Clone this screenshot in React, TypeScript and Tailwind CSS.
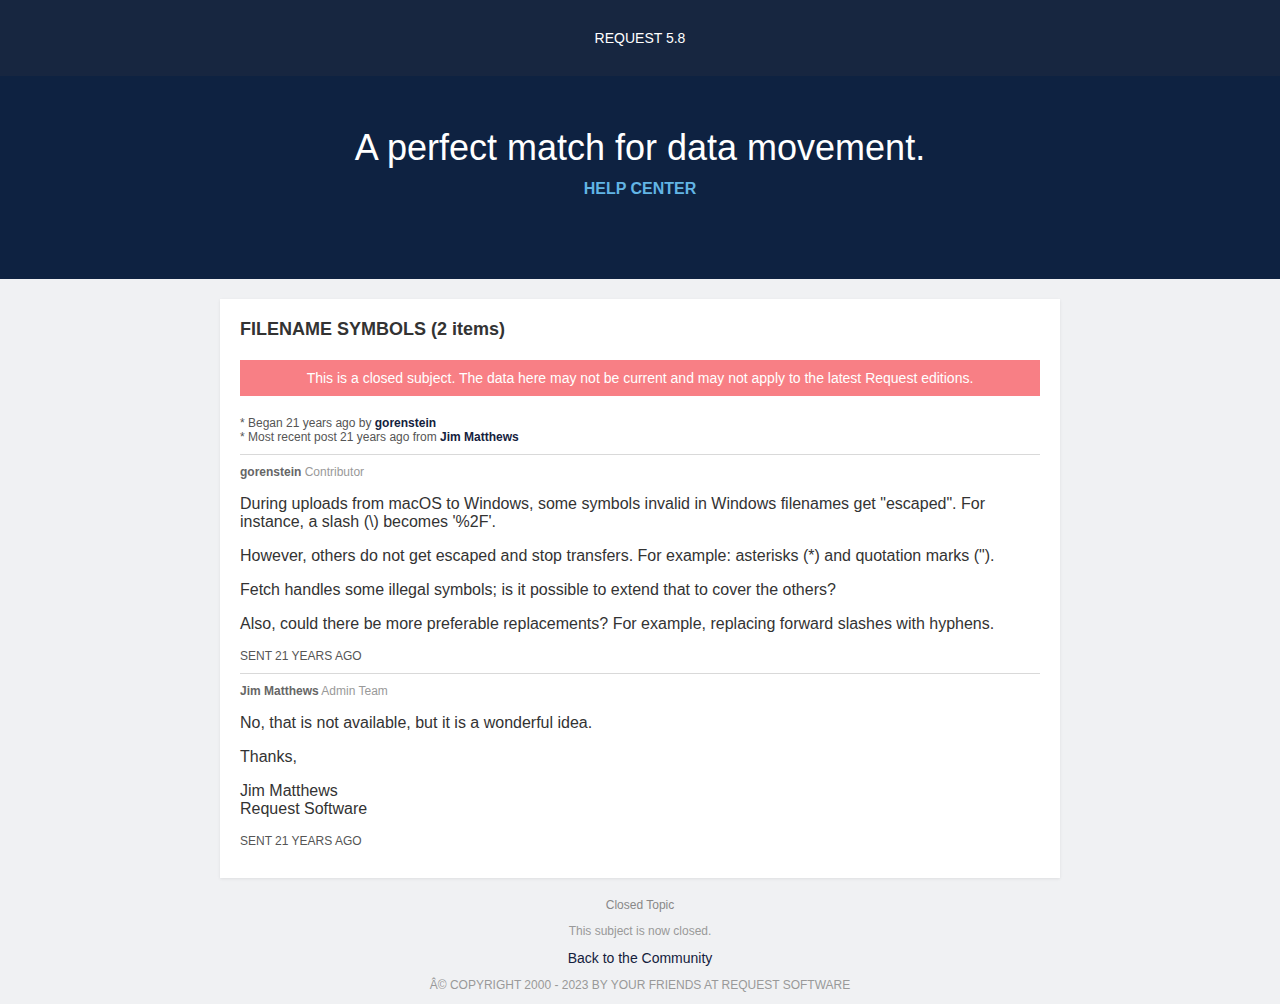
export default function App() {
    return (
        <div className="min-h-[1004px] bg-[#f0f1f3] text-[#333] font-['Liberation_Sans',Arial,sans-serif]">
            <div className="h-[76px] bg-[#172640] flex items-center justify-center">
                <span className="text-white text-[14px]">REQUEST 5.8</span>
            </div>

            <div className="h-[203px] bg-[#0e2241] flex flex-col items-center pt-[50px]">
                <h1 className="text-white text-[36px] leading-[44px]">A perfect match for data movement.</h1>
                <a className="mt-[9px] text-[#62b5e5] text-[16px] font-bold leading-[20px]">HELP CENTER</a>
            </div>

            <div className="pt-[20px] flex flex-col items-center">
                <div className="w-[840px] bg-white shadow-[0_1px_3px_rgba(0,0,0,0.08)] px-[20px] pt-[18px] pb-[30px]">
                    <h2 className="text-[18px] font-bold leading-[24px] text-[#333]">FILENAME SYMBOLS (2 items)</h2>

                    <div className="mt-[19px] h-[36px] bg-[#f87f85] flex items-center justify-center text-white text-[14px]">
                        This is a closed subject. The data here may not be current and may not apply to the latest Request editions.
                    </div>

                    <div className="mt-[20px] text-[12px] leading-[14px] text-[#555]">
                        <div>* Began 21 years ago by <span className="font-bold text-[#14213d]">gorenstein</span></div>
                        <div>* Most recent post 21 years ago from <span className="font-bold text-[#14213d]">Jim Matthews</span></div>
                    </div>

                    <div className="mt-[10px] border-t border-[#d9d9d9]" />

                    <div className="pt-[10px]">
                        <div className="text-[12px] leading-[14px]">
                            <span className="font-bold text-[#666]">gorenstein</span> <span className="text-[#999]">Contributor</span>
                        </div>
                        <div className="mt-[16px] text-[16px] leading-[18px] text-[#333] flex flex-col gap-[16px]">
                            <p>During uploads from macOS to Windows, some symbols invalid in Windows filenames get "escaped". For instance, a slash (\) becomes '%2F'.</p>
                            <p>However, others do not get escaped and stop transfers. For example: asterisks (*) and quotation marks (").</p>
                            <p>Fetch handles some illegal symbols; is it possible to extend that to cover the others?</p>
                            <p>Also, could there be more preferable replacements? For example, replacing forward slashes with hyphens.</p>
                        </div>
                        <div className="mt-[16px] text-[12px] leading-[14px] text-[#555]">SENT 21 YEARS AGO</div>
                    </div>

                    <div className="mt-[10px] border-t border-[#d9d9d9]" />

                    <div className="pt-[10px]">
                        <div className="text-[12px] leading-[14px]">
                            <span className="font-bold text-[#666]">Jim Matthews</span> <span className="text-[#999]">Admin Team</span>
                        </div>
                        <div className="mt-[16px] text-[16px] leading-[18px] text-[#333] flex flex-col gap-[16px]">
                            <p>No, that is not available, but it is a wonderful idea.</p>
                            <p>Thanks,</p>
                            <p>Jim Matthews<br />Request Software</p>
                        </div>
                        <div className="mt-[16px] text-[12px] leading-[14px] text-[#555]">SENT 21 YEARS AGO</div>
                    </div>
                </div>

                <div className="mt-[20px] flex flex-col items-center text-center">
                    <div className="text-[12px] leading-[14px] text-[#888]">Closed Topic</div>
                    <div className="mt-[12px] text-[12px] leading-[14px] text-[#999]">This subject is now closed.</div>
                    <a className="mt-[12px] text-[14px] leading-[16px] text-[#14213d]">Back to the Community</a>
                    <div className="mt-[12px] text-[12px] leading-[14px] text-[#999]">Â© COPYRIGHT 2000 - 2023 BY YOUR FRIENDS AT REQUEST SOFTWARE</div>
                </div>
            </div>
        </div>
    );
}
